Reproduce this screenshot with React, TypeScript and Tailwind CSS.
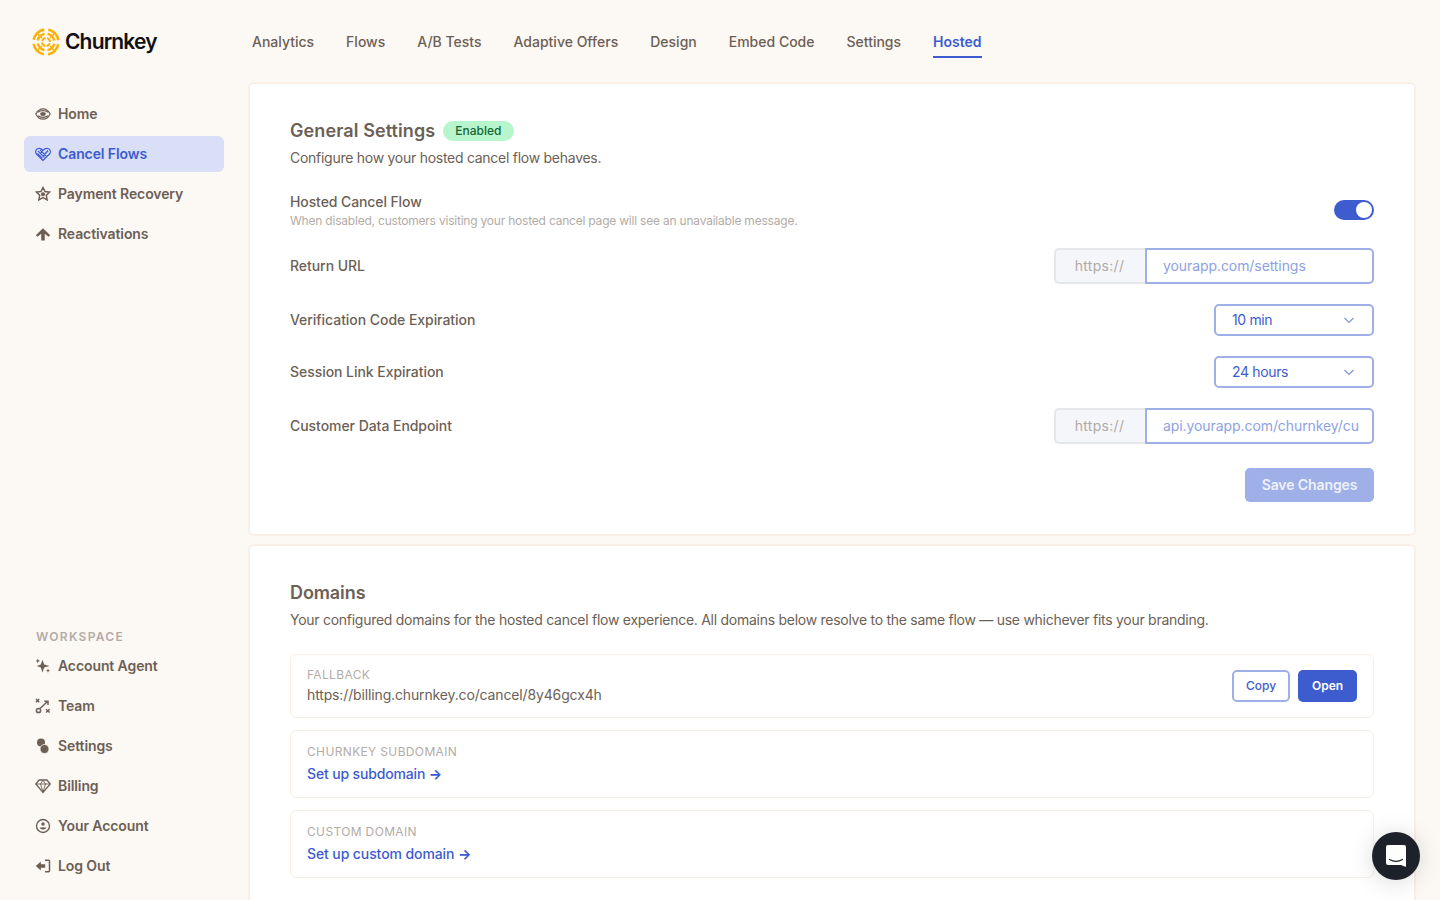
import React from 'react';

const font = { fontFamily: 'Inter, "Liberation Sans", sans-serif' };

// sidebar icons, drawn by hand at 16px
const HomeIcon = () => (
  <svg width="16" height="16" viewBox="0 0 16 16" fill="none" stroke="currentColor" strokeWidth="1.200">
    <path d="M.8 8c2-3.800 4.500-5.200 7.200-5.200s5.200 1.400 7.200 5.200c-2 3.800-4.500 5.200-7.200 5.200S2.800 11.800.8 8z" />
    <path d="M3 6.300C4.500 5 6.200 4.700 8 4.700s3.500.3 5 1.600M3 9.700c1.500 1.300 3.200 1.600 5 1.600s3.500-.3 5-1.600" />
    <ellipse cx="8" cy="8" rx="2.800" ry="1.900" fill="currentColor" stroke="none" />
  </svg>
);
const HeartIcon = () => (
  <svg width="16" height="16" viewBox="0 0 16 16" fill="none" stroke="currentColor" strokeWidth="1.200">
    <path d="M8 14.500 1.500 8C.1 6.300.5 3.800 2.300 2.800c1.900-1 4-.4 5.700 1.500 1.700-1.900 3.800-2.500 5.700-1.500 1.800 1 2.200 3.500.8 5.200L8 14.500z" />
    <path d="M2.800 4.800 9.500 11.500M5 3.800l6.200 6.200M2.400 7.400l5 5M8 4.300 5.800 6.800M13 4.500 7.800 10.500" />
  </svg>
);
const StarIcon = () => (
  <svg width="16" height="16" viewBox="0 0 16 16" fill="none" stroke="currentColor" strokeWidth="1.500">
    <path d="M8 1.500 10 5.500l4.500.6-3.200 3.100.8 4.600L8 11.700l-4.100 2.100.8-4.600L1.500 6.100 6 5.500 8 1.500z" />
    <circle cx="8" cy="8.200" r="2" fill="currentColor" stroke="none" />
  </svg>
);
const ArrowUpIcon = () => (
  <svg width="16" height="16" viewBox="0 0 16 16" fill="currentColor">
    <path d="M8 2.200 15.200 9.200l-1.700 1.500-3.700-3v6.800H6.200V7.700l-3.700 3L.8 9.200 8 2.200z" />
  </svg>
);
const SparkIcon = () => (
  <svg width="16" height="16" viewBox="0 0 16 16" fill="currentColor">
    <path d="M7.500 1.800 9.200 6.500l5.300 1.600-5.300 1.500L7.500 14.500 5.800 9.600 1.800 8.100l4-1.600 1.700-4.700z" />
    <path d="M2.800.4l.7 1.800 1.600.7-1.600.7-.7 1.800-.7-1.800L.5 2.900l1.600-.7.700-1.800zM13 10.500l.6 1.500 1.400.6-1.400.6-.6 1.500-.6-1.500-1.300-.6 1.300-.6.600-1.500z" />
  </svg>
);
const TeamIcon = () => (
  <svg width="16" height="16" viewBox="0 0 16 16" fill="none" stroke="currentColor" strokeWidth="1.500">
    <path d="M1 1l3.200 3.200M4.200 1 1 4.200M11 11.200l3.600 3.300M14.600 11.200 11 14.500" />
    <circle cx="3.500" cy="12.500" r="2.100" />
    <path d="M5 10.500 12 4M9.300 3.200H13V7" />
  </svg>
);
const SettingsIcon = () => (
  <svg width="16" height="16" viewBox="0 0 16 16" fill="currentColor">
    <circle cx="6" cy="4.500" r="4" />
    <circle cx="9.500" cy="11" r="4.500" stroke="#fcf8f4" strokeWidth="0.800" />
  </svg>
);
const GemIcon = () => (
  <svg width="16" height="16" viewBox="0 0 16 16" fill="none" stroke="currentColor" strokeWidth="1.300">
    <path d="M4 2h8l3.200 4L8 14.500.8 6 4 2z" />
    <path d="M.8 6h14.400M5.500 6 8 14 10.500 6M5.500 6 8 2l2.500 4" strokeWidth="0.900" />
  </svg>
);
const FaceIcon = () => (
  <svg width="16" height="16" viewBox="0 0 16 16" fill="none" stroke="currentColor" strokeWidth="1.400">
    <circle cx="8" cy="8" r="6.500" />
    <circle cx="8" cy="6" r="1.700" fill="currentColor" stroke="none" />
    <path d="M4.500 9.800c1.800 2.400 5.200 2.400 7 0-1.800-.8-5.200-.8-7 0z" fill="currentColor" stroke="none" />
  </svg>
);
const LogoutIcon = () => (
  <svg width="16" height="16" viewBox="0 0 16 16" fill="none" stroke="currentColor">
    <path d="M.8 8 5.800 3.500v2.800h4.400v3.400H5.800v2.800L.8 8z" fill="currentColor" stroke="none" />
    <path d="M10 2.300h3.500a1 1 0 0 1 1 1v9.400a1 1 0 0 1-1 1H10" strokeWidth="1.500" />
  </svg>
);

const Logo = () => (
  <svg width="28" height="28" viewBox="0 0 28 28" fill="none" stroke="#fbb109">
    <circle cx="14" cy="14" r="12.500" strokeWidth="2.600" strokeDasharray="15.600 4" strokeDashoffset="7.800" transform="rotate(45 14 14)" />
    <circle cx="14" cy="14" r="8.300" strokeWidth="2.400" strokeDasharray="10 3" strokeDashoffset="5" transform="rotate(45 14 14)" />
    <circle cx="14" cy="14" r="4" strokeWidth="2" strokeDasharray="5 1.280" strokeDashoffset="2.500" transform="rotate(45 14 14)" />
    <path d="M5 5l5 5M23 5l-5 5M5 23l5-5M23 23l-5-5" strokeWidth="1.500" />
  </svg>
);

const Chevron = () => (
  <svg width="12" height="12" viewBox="0 0 12 12" fill="none" stroke="#7f93dc" strokeWidth="1.200">
    <path d="M1.500 4 6 8.500 10.500 4" />
  </svg>
);

const topTabs = ['Analytics', 'Flows', 'A/B Tests', 'Adaptive Offers', 'Design', 'Embed Code', 'Settings', 'Hosted'];

const mainNav = [
  { label: 'Home', icon: <HomeIcon /> },
  { label: 'Cancel Flows', icon: <HeartIcon />, active: true },
  { label: 'Payment Recovery', icon: <StarIcon /> },
  { label: 'Reactivations', icon: <ArrowUpIcon /> },
];

const workspaceNav = [
  { label: 'Account Agent', icon: <SparkIcon /> },
  { label: 'Team', icon: <TeamIcon /> },
  { label: 'Settings', icon: <SettingsIcon /> },
  { label: 'Billing', icon: <GemIcon /> },
  { label: 'Your Account', icon: <FaceIcon /> },
  { label: 'Log Out', icon: <LogoutIcon /> },
];

const NavItem = ({ label, icon, active }: { label: string; icon: React.ReactNode; active?: boolean }) => (
  <div
    className={`flex h-9 items-center gap-[7px] rounded-md px-[11px] text-[14px] font-semibold tracking-[-0.1px] ${
      active ? 'bg-[#d9dff7] text-[#3d5cce]' : 'text-[#6c5f56]'
    }`}
  >
    <span className="flex w-4 shrink-0 justify-center">{icon}</span>
    <span className="pb-[2px]">{label}</span>
  </div>
);

const UrlField = ({ placeholder }: { placeholder: string }) => (
  <div className="flex h-9 w-[320px] text-[14px]">
    <div className="flex w-[91px] items-center justify-center rounded-l-[5px] border-2 border-r-0 border-[#e6e7ea] bg-[#f5f6f9] pb-[2px] pr-[2px] tracking-[0.3px] text-[#b0aaa5]">
      https://
    </div>
    <div className="flex flex-1 items-center whitespace-nowrap rounded-r-[5px] border-2 border-[#9fb0e8] bg-white pb-[2px] pl-4 pr-2 tracking-[-0.08px] text-[#8ea1e3]">
      {placeholder}
    </div>
  </div>
);

const SelectField = ({ value }: { value: string }) => (
  <div className="flex h-8 w-40 items-center justify-between rounded-[5px] border-2 border-[#9fb0e8] bg-white pl-4 pr-[17px] text-[14px] tracking-[-0.35px] text-[#3d5cce]">
    <span className="pb-[2px]">{value}</span>
    <Chevron />
  </div>
);

const Row = ({ label, children, className }: { label: string; children: React.ReactNode; className?: string }) => (
  <div className={`flex items-center justify-between ${className}`}>
    <span className="pb-[2px] text-[14px] font-medium tracking-[-0.05px] text-[#6c5f56]">{label}</span>
    {children}
  </div>
);

const DomainBox = ({ label, children, className }: { label: string; children: React.ReactNode; className?: string }) => (
  <div className={`rounded-md border border-[#f9efe7] px-4 ${className}`}>
    <div className="text-[12px] uppercase leading-4 tracking-[0.35px] text-[#b3aca6]">{label}</div>
    {children}
  </div>
);

export default function App() {
  return (
    <div style={font} className="relative flex h-screen overflow-hidden bg-[#fcf8f4]">
      <aside className="flex h-full w-[248px] shrink-0 flex-col justify-between px-6 pb-4">
        <div>
          <div className="flex h-14 items-center gap-[5px] pl-2 pt-7">
            <Logo />
            <span className="text-[21px] font-semibold leading-7 tracking-[-0.85px] text-[#111]">Churnkey</span>
          </div>
          <nav className="mt-[40px] flex flex-col gap-1">
            {mainNav.map((item) => (
              <NavItem key={item.label} {...item} />
            ))}
          </nav>
        </div>
        <div>
          <div className="mb-[2px] pl-3 text-[12px] font-semibold tracking-[1.3px] text-[#b3aca6]">WORKSPACE</div>
          <nav className="flex flex-col gap-1">
            {workspaceNav.map((item) => (
              <NavItem key={item.label} {...item} />
            ))}
          </nav>
        </div>
      </aside>

      <main className="flex min-w-0 flex-1 flex-col pr-[24px]">
        <div className="flex h-[82px] shrink-0 gap-8 pl-[4px] pt-[29px]">
          {topTabs.map((tab) => (
            <div
              key={tab}
              className={`h-[29px] border-b-2 text-[14px] font-medium leading-[26px] ${
                tab === 'Hosted' ? 'border-[#3d5cce] font-semibold text-[#3d5cce]' : 'border-transparent text-[#6c5f56]'
              }`}
            >
              {tab}
            </div>
          ))}
        </div>

        <section className="shrink-0 rounded-md border-2 border-[#f9efe7] bg-white px-10 pb-[32px] pt-[33px]">
          <div className="flex items-center gap-2">
            <h2 className="text-[18px] font-semibold leading-7 tracking-[0.1px] text-[#6c5f56]">General Settings</h2>
            <span className="rounded-full bg-[#b7f5cc] px-3 text-[12px] font-medium leading-5 text-[#166534]">Enabled</span>
          </div>
          <p className="mt-[3px] text-[14px] leading-5 tracking-[-0.27px] text-[#6c5f56]">Configure how your hosted cancel flow behaves.</p>

          <div className="mt-[24px] flex items-center justify-between">
            <div>
              <div className="text-[14px] font-medium leading-5 tracking-[-0.1px] text-[#6c5f56]">Hosted Cancel Flow</div>
              <div className="text-[12px] leading-[18px] tracking-[-0.21px] text-[#b3aca6]">
                When disabled, customers visiting your hosted cancel page will see an unavailable message.
              </div>
            </div>
            <div className="-mt-[2px] flex h-5 w-10 items-center justify-end rounded-full bg-[#3d5cce] pr-[2px]">
              <span className="h-4 w-4 rounded-full bg-white" />
            </div>
          </div>

          <Row label="Return URL" className="mt-[18px]">
            <UrlField placeholder="yourapp.com/settings" />
          </Row>
          <Row label="Verification Code Expiration" className="mt-5">
            <SelectField value="10 min" />
          </Row>
          <Row label="Session Link Expiration" className="mt-5">
            <SelectField value="24 hours" />
          </Row>
          <Row label="Customer Data Endpoint" className="mt-5">
            <UrlField placeholder="api.yourapp.com/churnkey/cu" />
          </Row>

          <div className="mt-6 flex justify-end">
            <button className="h-[34px] w-[129px] rounded-[5px] bg-[#9fb0e8] pb-[2px] text-[14px] font-semibold tracking-[-0.1px] text-[#eef1fb]">
              Save Changes
            </button>
          </div>
        </section>

        <section className="mt-2 flex-1 rounded-t-md border-2 border-b-0 border-[#f9efe7] bg-white px-10 pt-[33px]">
          <h2 className="text-[18px] font-semibold leading-7 tracking-[-0.1px] text-[#6c5f56]">Domains</h2>
          <p className="mt-[3px] text-[14px] leading-5 tracking-[-0.27px] text-[#6c5f56]">
            Your configured domains for the hosted cancel flow experience. All domains below resolve to the same flow — use whichever fits your branding.
          </p>

          <div className="mt-6 flex h-16 items-center justify-between rounded-md border border-[#f9efe7] px-4">
            <div>
              <div className="text-[12px] uppercase leading-4 tracking-[0.35px] text-[#b3aca6]">Fallback</div>
              <div className="mt-[2px] text-[14px] leading-5 tracking-[-0.14px] text-[#6c5f56]">https://billing.churnkey.co/cancel/8y46gcx4h</div>
            </div>
            <div className="flex gap-2">
              <button className="h-8 w-[58px] rounded-[5px] border-2 border-[#9fb0e8] bg-white text-[12px] font-medium text-[#3d5cce]">Copy</button>
              <button className="h-8 w-[59px] rounded-[5px] bg-[#3d5cce] text-[12px] font-semibold text-white">Open</button>
            </div>
          </div>

          <DomainBox label="Churnkey subdomain" className="mt-3 h-[68px] pt-[13px]">
            <div className="mt-1 text-[14px] font-medium leading-5 tracking-[-0.15px] text-[#3d5cce]">
              Set up subdomain <span className="font-bold">→</span>
            </div>
          </DomainBox>
          <DomainBox label="Custom domain" className="mt-3 h-[68px] pt-[13px]">
            <div className="mt-1 text-[14px] font-medium leading-5 tracking-[-0.1px] text-[#3d5cce]">
              Set up custom domain <span className="font-bold">→</span>
            </div>
          </DomainBox>
        </section>
      </main>

      {/* chat launcher */}
      <div className="absolute bottom-5 right-5 flex h-12 w-12 items-center justify-center rounded-full bg-[#1d2129] shadow-[0_2px_24px_rgba(0,0,0,0.15)]">
        <svg width="22" height="24" viewBox="0 0 22 24">
          <path d="M3 1h16a2 2 0 0 1 2 2v20l-5-1.900H3a2 2 0 0 1-2-2V3a2 2 0 0 1 2-2z" fill="#fff" />
          <path d="M4.500 15.500c4 2.200 9 2.200 13 0" fill="none" stroke="#1d2129" strokeWidth="1.200" strokeLinecap="round" />
        </svg>
      </div>
    </div>
  );
}
